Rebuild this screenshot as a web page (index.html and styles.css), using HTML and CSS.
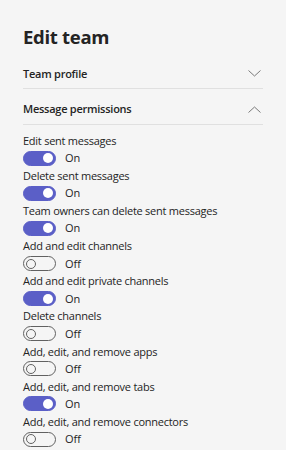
FILE: index.html
```html
<!DOCTYPE html>
<html>
<head>
<meta charset="utf-8">
<link rel="stylesheet" href="styles.css">
</head>
<body>
<div class="panel">
  <h1 class="title">Edit team</h1>
  <div class="acc-header">
    <span>Team profile</span>
    <svg class="chev" width="13" height="7" viewBox="0 0 13 7"><path d="M0.5 0.5 L6.5 6 L12.5 0.5" fill="none" stroke="#7a7a7a" stroke-width="1"/></svg>
  </div>
  <div class="acc-header">
    <span>Message permissions</span>
    <svg class="chev" width="13" height="7" viewBox="0 0 13 7"><path d="M0.5 6.5 L6.5 1 L12.5 6.5" fill="none" stroke="#7a7a7a" stroke-width="1"/></svg>
  </div>
  <div class="list">
    <div class="item"><div class="label">Edit sent messages</div><div class="row"><span class="toggle on"></span><span class="state">On</span></div></div>
    <div class="item"><div class="label">Delete sent messages</div><div class="row"><span class="toggle on"></span><span class="state">On</span></div></div>
    <div class="item"><div class="label">Team owners can delete sent messages</div><div class="row"><span class="toggle on"></span><span class="state">On</span></div></div>
    <div class="item"><div class="label">Add and edit channels</div><div class="row"><span class="toggle"></span><span class="state">Off</span></div></div>
    <div class="item"><div class="label">Add and edit private channels</div><div class="row"><span class="toggle on"></span><span class="state">On</span></div></div>
    <div class="item"><div class="label">Delete channels</div><div class="row"><span class="toggle"></span><span class="state">Off</span></div></div>
    <div class="item"><div class="label">Add, edit, and remove apps</div><div class="row"><span class="toggle"></span><span class="state">Off</span></div></div>
    <div class="item"><div class="label">Add, edit, and remove tabs</div><div class="row"><span class="toggle on"></span><span class="state">On</span></div></div>
    <div class="item"><div class="label">Add, edit, and remove connectors</div><div class="row"><span class="toggle"></span><span class="state">Off</span></div></div>
  </div>
</div>
</body>
</html>
```
FILE: styles.css
```css
html, body {
  margin: 0;
  padding: 0;
  background: #f5f5f5;
}
body {
  font-family: "Open Sans", "Noto Sans", sans-serif;
  color: #242424;
  overflow: hidden;
}
.panel {
  padding: 0 23px;
  width: 240px;
}
.title {
  margin: 0;
  padding-top: 25px;
  height: 28.5px;
  font-size: 18.5px;
  line-height: 24px;
  font-weight: 700;
  letter-spacing: -0.3px;
}
.acc-header {
  display: flex;
  align-items: center;
  justify-content: space-between;
  padding: 12px 2px 6.5px 0;
  line-height: 16px;
  height: 16px;
  font-size: 11px;
  font-weight: 600;
  letter-spacing: -0.25px;
  border-bottom: 1px solid #e0e0e0;
}
.chev {
  display: block;
}
.list {
  padding-top: 7.5px;
}
.label {
  font-size: 11px;
  line-height: 17.5px;
  height: 17.5px;
  letter-spacing: -0.25px;
  white-space: nowrap;
}
.row {
  display: flex;
  align-items: center;
  height: 17.6px;
  gap: 9px;
}
.state {
  font-size: 11px;
  line-height: 16px;
}
.toggle {
  position: relative;
  box-sizing: border-box;
  width: 33px;
  height: 15px;
  border-radius: 8px;
  border: 1px solid #616161;
  background: transparent;
}
.toggle::after {
  content: "";
  position: absolute;
  box-sizing: border-box;
  top: 1.5px;
  left: 2px;
  width: 10px;
  height: 10px;
  border-radius: 50%;
  border: 1px solid #616161;
}
.toggle.on {
  background: #5b5fc7;
  border-color: #5b5fc7;
}
.toggle.on::after {
  left: auto;
  right: 2px;
  border: none;
  background: #ffffff;
}
```
